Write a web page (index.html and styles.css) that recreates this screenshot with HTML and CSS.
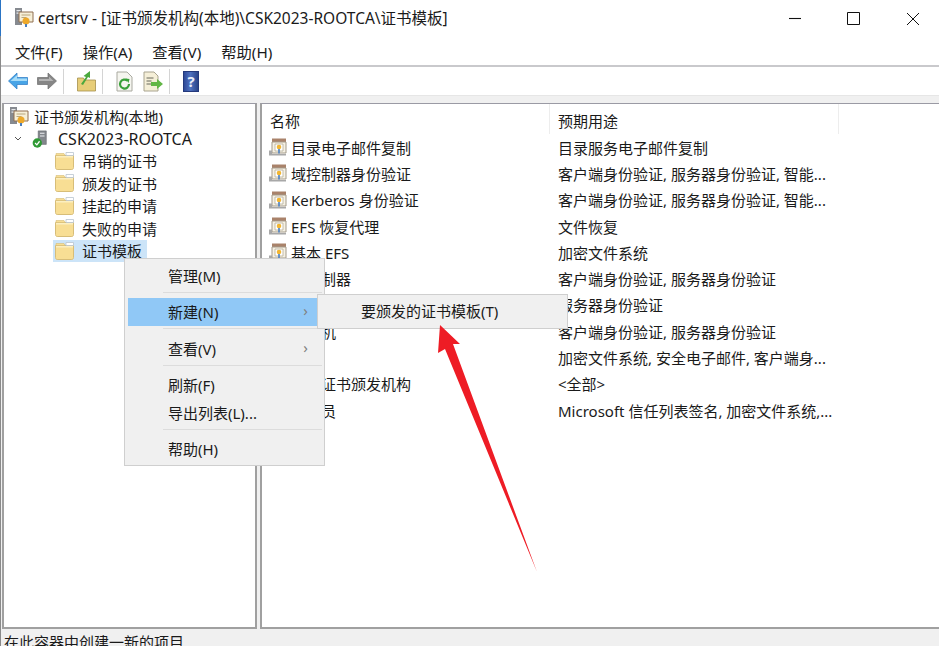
FILE: index.html
```html
<!DOCTYPE html>
<html>
<head>
    <title>certsrv</title>
    <link rel="stylesheet" href="styles.css">
</head>
<body>
    <svg class="defs" width="0" height="0">
        <symbol id="i-tpl" viewBox="0 0 18 18">
            <path d="M3 .5h14v3.500H3z" fill="#a9826a"/>
            <path d="M3 4h14v11H3z" fill="#f6f1e4" stroke="#a39a8a"/>
            <path d="M6 6h8v7H6z" fill="#fff" stroke="#b5ad98" stroke-width=".8"/>
            <path d="M0 12.500h3V16h14v1.500H0z" fill="#a8a8a8"/>
            <circle cx="10" cy="9" r="2.300" fill="#f2b632"/>
            <path d="M9.200 11h1.600v4.500H9.200z" fill="#4a7fc1"/>
        </symbol>
        <symbol id="i-ca" viewBox="0 0 20 20">
            <path d="M1 1h7v17H1z" fill="#868a90"/>
            <path d="M2.500 3h4v1.200h-4zM2.500 5.500h4v1.200h-4z" fill="#e6e8ea"/>
            <path d="M5 5h14v10H5z" fill="#f6efd8" stroke="#8f6f50"/>
            <path d="M7.500 8h9M7.500 10.500h5" stroke="#b9a67c"/>
            <circle cx="12" cy="14" r="3.500" fill="#eda92c"/>
            <path d="M11 17h2v3h-2z" fill="#4a7fc1"/>
        </symbol>
        <symbol id="i-server" viewBox="0 0 18 20">
            <path d="M7 1h9v15H7z" fill="#83878c" stroke="#5b5f64" stroke-width=".6"/>
            <path d="M9 3h5v1.200H9zM9 6h5v1.200H9z" fill="#eef0f2"/>
            <circle cx="6" cy="14.500" r="5.200" fill="#2f9a35"/>
            <path d="M3.500 14.500l2 2 3-4" fill="none" stroke="#fff" stroke-width="1.400"/>
        </symbol>
        <symbol id="i-folder" viewBox="0 0 19 18">
            <path d="M.5 3.500V15.500c0 1 .6 2 1.700 2h14.600c1.100 0 1.700-1 1.700-2V3.500z" fill="#f8de94" stroke="#d7bd78"/>
            <path d="M1 1.500h8l1 2H1z" fill="#f8de94" stroke="#d7bd78" stroke-width=".6"/>
            <path d="M11 .5h7.500v3H11z" fill="#fff" stroke="#b9c4cf" stroke-width=".8"/>
            <path d="M1 4h17v1.500H1z" fill="#fcefc0"/>
        </symbol>
    </svg>

    <div class="window">
        <div class="title-bar">
            <svg class="title-icon"><use href="#i-ca"/></svg>
            <span class="title-text">certsrv - [证书颁发机构(本地)\CSK2023-ROOTCA\证书模板]</span>
            <div class="win-buttons">
                <svg width="14" height="14" viewBox="0 0 14 14"><path d="M1 6.500h12" stroke="#111" stroke-width="1.100"/></svg>
                <svg width="14" height="14" viewBox="0 0 14 14"><path d="M.5.500h12v12H.5z" fill="none" stroke="#111"/></svg>
                <svg width="14" height="14" viewBox="0 0 14 14"><path d="M1 1l12 12M13 1L1 13" stroke="#111"/></svg>
            </div>
        </div>

        <div class="menu-bar">
            <span>文件(F)</span>
            <span>操作(A)</span>
            <span>查看(V)</span>
            <span>帮助(H)</span>
        </div>

        <div class="toolbar">
            <div class="tool-group">
                <svg width="20" height="18" viewBox="0 0 20 18"><path d="M.5 9l8.500-8v4.500h10.500v7H9V17z" fill="#48a4e6" stroke="#2a78c4" stroke-width=".7"/><path d="M2.500 9L9 3v3.500h10V9H7z" fill="#a6dcf8"/></svg>
                <svg width="20" height="18" viewBox="0 0 20 18"><path d="M19.500 9L11 1v4.500H.5v7H11V17z" fill="#868686" stroke="#6d6d6d" stroke-width=".7"/><path d="M2 7h10V4.500L16.500 9H2z" fill="#b4b4b4"/></svg>
            </div>
            <i class="tool-sep"></i>
            <div class="tool-group">
                <svg width="19" height="22" viewBox="0 0 19 22"><path d="M.5 8h6l1 2h11v11H.5z" fill="#e7cd78" stroke="#a48f4c" stroke-width=".8"/><path d="M4 14l5-7-2.500-1L13 1v7l-2-1-5 8z" fill="#4ba83e"/></svg>
            </div>
            <i class="tool-sep"></i>
            <div class="tool-group">
                <svg width="17" height="21" viewBox="0 0 17 21"><path d="M1 1h10l5 5v14H1z" fill="#f5f5ef" stroke="#a9a9a0"/><path d="M13 13a4.500 4.500 0 1 1-1.500-3.300" fill="none" stroke="#3aa03a" stroke-width="2.200"/><path d="M9.500 7.500l4 .5-1 4z" fill="#3aa03a"/></svg>
                <svg width="20" height="21" viewBox="0 0 20 21"><path d="M1 1h10l4 4v15H1z" fill="#f5efd8" stroke="#a9a48f"/><path d="M3.500 7h7M3.500 10h5M3.500 13h5" stroke="#66665a"/><path d="M8 11h6V8l6 5-6 5v-3H8z" fill="#63b646"/></svg>
            </div>
            <i class="tool-sep"></i>
            <span class="help-btn">?</span>
        </div>

        <div class="band"></div>

        <div class="panes">
            <div class="tree">
                <div class="tree-row root"><svg class="ico"><use href="#i-ca"/></svg>证书颁发机构(本地)</div>
                <div class="tree-row ca">
                    <svg class="chevron" width="8" height="6" viewBox="0 0 8 6"><path d="M1 1l3 3 3-3" fill="none" stroke="#555"/></svg>
                    <svg class="ico"><use href="#i-server"/></svg>CSK2023-ROOTCA
                </div>
                <div class="tree-row leaf"><svg class="ico"><use href="#i-folder"/></svg>吊销的证书</div>
                <div class="tree-row leaf"><svg class="ico"><use href="#i-folder"/></svg>颁发的证书</div>
                <div class="tree-row leaf"><svg class="ico"><use href="#i-folder"/></svg>挂起的申请</div>
                <div class="tree-row leaf"><svg class="ico"><use href="#i-folder"/></svg>失败的申请</div>
                <div class="tree-row leaf"><span class="selected"><svg class="ico"><use href="#i-folder"/></svg>证书模板</span></div>
            </div>

            <div class="list">
                <div class="list-head">
                    <span class="col-name">名称</span>
                    <span class="col-use">预期用途</span>
                    <span class="col-rest"></span>
                </div>
                <div class="list-row"><span class="col-name"><svg class="ico"><use href="#i-tpl"/></svg>目录电子邮件复制</span><span class="col-use">目录服务电子邮件复制</span></div>
                <div class="list-row"><span class="col-name"><svg class="ico"><use href="#i-tpl"/></svg>域控制器身份验证</span><span class="col-use">客户端身份验证, 服务器身份验证, 智能...</span></div>
                <div class="list-row"><span class="col-name"><svg class="ico"><use href="#i-tpl"/></svg>Kerberos 身份验证</span><span class="col-use">客户端身份验证, 服务器身份验证, 智能...</span></div>
                <div class="list-row"><span class="col-name"><svg class="ico"><use href="#i-tpl"/></svg>EFS 恢复代理</span><span class="col-use">文件恢复</span></div>
                <div class="list-row"><span class="col-name"><svg class="ico"><use href="#i-tpl"/></svg>基本 EFS</span><span class="col-use">加密文件系统</span></div>
                <div class="list-row"><span class="col-name"><svg class="ico"><use href="#i-tpl"/></svg>域控制器</span><span class="col-use">客户端身份验证, 服务器身份验证</span></div>
                <div class="list-row"><span class="col-name"><svg class="ico"><use href="#i-tpl"/></svg>Web 服务器</span><span class="col-use">服务器身份验证</span></div>
                <div class="list-row"><span class="col-name"><svg class="ico"><use href="#i-tpl"/></svg>计算机</span><span class="col-use">客户端身份验证, 服务器身份验证</span></div>
                <div class="list-row"><span class="col-name"><svg class="ico"><use href="#i-tpl"/></svg>用户</span><span class="col-use">加密文件系统, 安全电子邮件, 客户端身...</span></div>
                <div class="list-row"><span class="col-name"><svg class="ico"><use href="#i-tpl"/></svg>从属证书颁发机构</span><span class="col-use">&lt;全部&gt;</span></div>
                <div class="list-row"><span class="col-name"><svg class="ico"><use href="#i-tpl"/></svg>管理员</span><span class="col-use">Microsoft 信任列表签名, 加密文件系统,...</span></div>
            </div>
        </div>

        <div class="status-bar">在此容器中创建一新的项目</div>
    </div>

    <div class="context-menu">
        <div class="menu-item">管理(M)</div>
        <i class="menu-sep"></i>
        <div class="menu-item active">新建(N)<b class="sub-arrow">›</b></div>
        <i class="menu-sep"></i>
        <div class="menu-item">查看(V)<b class="sub-arrow">›</b></div>
        <i class="menu-sep"></i>
        <div class="menu-item">刷新(F)</div>
        <div class="menu-item">导出列表(L)...</div>
        <i class="menu-sep"></i>
        <div class="menu-item">帮助(H)</div>
    </div>

    <div class="submenu">要颁发的证书模板(T)</div>

    <svg class="red-arrow" width="120" height="260" viewBox="0 0 120 260">
        <path d="M10 5L30 24 23 24 107 252 15 29 8 33z" fill="#ee1c25"/>
    </svg>
</body>
</html>
```

FILE: styles.css
```css
* {
    box-sizing: border-box;
}
html, body {
    margin: 0;
    height: 100%;
    overflow: hidden;
}
body {
    font-family: "Noto Sans", "Noto Sans CJK SC", sans-serif;
    font-size: 15px;
    color: #1a1a1a;
    background: #fff;
    position: relative;
}
.defs {
    position: absolute;
}
.window {
    height: 646px;
    display: flex;
    flex-direction: column;
    border-left: 1px solid #8a8a8a;
}
.title-bar {
    height: 36px;
    flex: none;
    display: flex;
    align-items: center;
    margin-left: -1px;
    padding: 0 0 2px 13px;
    border-left: 1px solid #2a74c4;
    font-size: 15.5px;
}
.title-icon {
    width: 20px;
    height: 20px;
    margin-right: 4px;
}
.title-text {
    flex: 1;
    white-space: nowrap;
}
.win-buttons {
    display: flex;
    gap: 45px;
    padding-right: 19px;
    margin-top: 4px;
}
.menu-bar {
    height: 31px;
    flex: none;
    display: flex;
    align-items: center;
    gap: 20px;
    padding-left: 14px;
    border-bottom: 2px solid #c9c9cc;
    font-size: 15.3px;
}
.toolbar {
    height: 28px;
    flex: none;
    display: flex;
    align-items: center;
    padding-left: 7px;
}
.tool-group {
    display: flex;
    align-items: center;
    gap: 9px;
}
.tool-group svg + svg {
    margin-left: 1px;
}
.tool-group:first-child svg + svg {
    margin-left: 0;
}
.tool-sep {
    width: 1px;
    height: 25px;
    margin: 0 13px 0 6px;
    background: #d4d4d4;
}
.help-btn {
    width: 16px;
    height: 21px;
    background: linear-gradient(90deg, #2f4a98, #4f72c0 45%, #2a4488);
    border: 1px solid #24397c;
    color: #e8ecf8;
    font-weight: 700;
    font-size: 15px;
    line-height: 18px;
    text-align: center;
}
.band {
    height: 8px;
    flex: none;
    background: #f0f0f0;
    border-top: 1px solid #e6e6e6;
}
.panes {
    flex: 1;
    display: flex;
    gap: 3px;
    background: #f0f0f0;
    min-height: 0;
    padding-left: 1px;
}
.tree {
    width: 255px;
    background: #fff;
    border: 2px solid #a0a0a0;
    border-top: 1px solid #9a9aa4;
    padding: 1px 0 0 5px;
}
.tree-row {
    height: 22.4px;
    display: flex;
    align-items: center;
    white-space: nowrap;
}
.ico {
    width: 18px;
    height: 18px;
    flex: none;
}
.tree-row.root .ico {
    width: 20px;
    height: 20px;
    margin-right: 5px;
}
.chevron {
    margin: 0 9px 0 5px;
}
.tree-row.ca {
    font-size: 16px;
}
.tree-row.ca .ico {
    margin-right: 9px;
}
.tree-row.leaf {
    padding-left: 46px;
}
.tree-row.leaf .ico {
    width: 19px;
    margin-right: 8px;
}
.selected {
    display: flex;
    align-items: center;
    height: 22px;
    background: #cce4f8;
    margin-left: -2px;
    padding: 0 5px 0 2px;
}
.list {
    flex: 1;
    background: #fff;
    border: 2px solid #a0a0a0;
    border-top: 1px solid #9a9aa4;
    border-right: none;
    overflow: hidden;
}
.list-head {
    height: 30px;
    display: flex;
    align-items: stretch;
}
.list-head span {
    padding-top: 2px;
    display: flex;
    align-items: center;
    border-right: 1px solid #ededed;
}
.list-head .col-rest {
    border-right: none;
}
.col-name {
    width: 288px;
    padding-left: 8px;
    flex: none;
    display: flex;
    align-items: center;
}
.col-use {
    width: 289px;
    padding-left: 8px;
    flex: none;
    white-space: nowrap;
}
.list-row {
    height: 26.3px;
    display: flex;
    align-items: center;
}
.list-row .col-name {
    padding-left: 7px;
}
.list-row .ico {
    margin-right: 4px;
}
.status-bar {
    height: 17px;
    flex: none;
    background: #f0f0f0;
    padding: 3px 0 0 3px;
    line-height: 20px;
    overflow: hidden;
    white-space: nowrap;
}
.context-menu {
    position: absolute;
    left: 124px;
    top: 258px;
    width: 201px;
    height: 208px;
    background: #f0f0f0;
    border: 1px solid #cfcfcf;
    padding: 3px 2px 0 3px;
}
.menu-item {
    height: 28px;
    line-height: 28px;
    padding-left: 40px;
    position: relative;
}
.menu-item.active {
    background: #90c8f6;
}
.sub-arrow {
    position: absolute;
    right: 14px;
    top: -2px;
    font-weight: 400;
    color: #808080;
}
.menu-sep {
    display: block;
    height: 1px;
    margin: 2px 0 5.33px 35px;
    background: #dcdcdc;
}
.submenu {
    position: absolute;
    left: 317px;
    top: 294px;
    width: 251px;
    height: 35px;
    line-height: 33px;
    background: #f0f0f0;
    border: 1px solid #cfcfcf;
    padding-left: 43px;
}
.red-arrow {
    position: absolute;
    left: 430px;
    top: 320px;
}
```
